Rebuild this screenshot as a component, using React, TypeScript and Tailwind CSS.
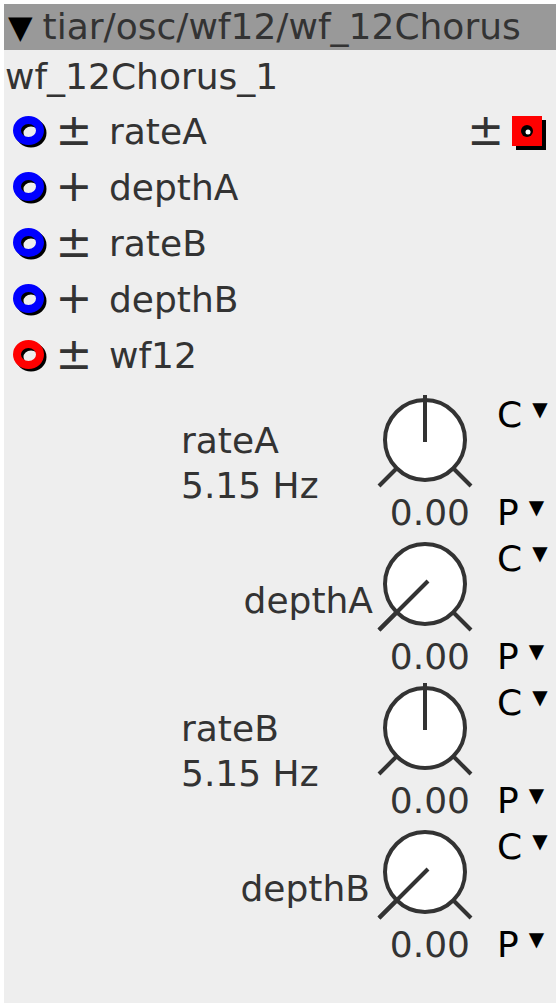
import React from "react";

const FONT = { fontFamily: '"DejaVu Sans", Verdana, sans-serif' };

function Ring({ color }: { color: string }) {
  return (
    <svg width="40" height="40" viewBox="0 0 40 40" className="block">
      <ellipse cx="19" cy="21" rx="11.5" ry="10.5" fill="none" stroke="#000" strokeWidth="8" />
      <ellipse cx="16.5" cy="18.5" rx="11.5" ry="10.5" fill="none" stroke={color} strokeWidth="8" />
    </svg>
  );
}

function Port({ color, sign, label }: { color: string; sign: string; label: string }) {
  return (
    <div className="flex items-center h-[56px]">
      <div className="w-[8px]" />
      <Ring color={color} />
      <div className="w-[40px] ml-[2px] text-[44px] leading-none text-[#333] text-center -translate-y-[2px]">{sign}</div>
      <div className="pl-[15px] text-[36px] leading-none text-[#333]">{label}</div>
    </div>
  );
}

function Knob({ bipolar }: { bipolar: boolean }) {
  const cx = 50;
  const cy = 56;
  const f1 = 28;
  const f2 = 46;
  return (
    <svg width="100" height="106" viewBox="0 0 100 106" className="block">
      <circle cx={cx} cy={cy} r="40" fill="#fff" stroke="#333" strokeWidth="4" />
      <line x1={cx - f1} y1={cy + f1} x2={cx - f2} y2={cy + f2} stroke="#333" strokeWidth="4" />
      <line x1={cx + f1} y1={cy + f1} x2={cx + f2} y2={cy + f2} stroke="#333" strokeWidth="4" />
      {bipolar ? (
        <line x1={cx} y1={cy + 2} x2={cx} y2={cy - 45} stroke="#333" strokeWidth="4" />
      ) : (
        <line x1={cx + 3} y1={cy - 3} x2={cx - f2} y2={cy + f2} stroke="#333" strokeWidth="4" />
      )}
    </svg>
  );
}

function KnobRow({
  label,
  sub,
  bipolar,
  labelClass,
}: {
  label: string;
  sub?: string;
  bipolar: boolean;
  labelClass: string;
}) {
  return (
    <div className="flex h-[144px]">
      <div className={"flex-1 flex items-center " + labelClass}>
        <div className="text-[36px] leading-[45px] text-[#333]">
          <div>{label}</div>
          {sub && <div>{sub}</div>}
        </div>
      </div>
      <div className="w-[100px] flex flex-col">
        <Knob bipolar={bipolar} />
        <div className="mt-[8px] h-[30px] text-[36px] leading-[30px] text-[#333] text-right pr-[5px]">0.00</div>
      </div>
      <div className="w-[52px] ml-[22px] mr-[7px] flex flex-col justify-between pt-[16px] text-[36px] leading-[30px] text-black">
        <div className="flex items-center">
          <span>C</span>
          <span className="ml-[10px] text-[20px] leading-[30px] -translate-y-[6px]">▼</span>
        </div>
        <div className="flex items-center">
          <span>P</span>
          <span className="ml-[10px] text-[20px] leading-[30px] -translate-y-[6px]">▼</span>
        </div>
      </div>
    </div>
  );
}

export default function App() {
  return (
    <div className="w-[560px] h-[1008px] bg-white pt-[4px] pl-[4px]" style={FONT}>
      <div className="w-[552px] h-[999px] bg-[#eeeeee] flex flex-col">
        <div className="h-[46px] bg-[#999999] flex items-center">
          <span className="ml-[4px] text-[32px] leading-none text-black">▼</span>
          <span className="ml-[10px] text-[36px] leading-none text-[#333]">tiar/osc/wf12/wf_12Chorus</span>
        </div>
        <div className="h-[54px] flex items-center pl-[1px] text-[36px] leading-none text-[#333]">wf_12Chorus_1</div>
        <div className="relative">
          <Port color="#0000ff" sign="±" label="rateA" />
          <Port color="#0000ff" sign="+" label="depthA" />
          <Port color="#0000ff" sign="±" label="rateB" />
          <Port color="#0000ff" sign="+" label="depthB" />
          <Port color="#ff0000" sign="±" label="wf12" />
          <div className="absolute top-0 right-[8px] h-[56px] flex items-center">
            <span className="text-[44px] leading-none text-[#333] -translate-y-[2px]">±</span>
            <svg width="40" height="40" viewBox="0 0 40 40" className="ml-[4px] block">
              <rect x="8" y="8" width="30" height="30" fill="#000" />
              <rect x="4" y="4" width="30" height="30" fill="#ff0000" />
              <circle cx="19" cy="19" r="6" fill="#000" />
              <circle cx="20" cy="20" r="2.5" fill="#fff" />
            </svg>
          </div>
        </div>
        <KnobRow label="rateA" sub="5.15 Hz" bipolar labelClass="justify-start pl-[177px] pt-[14px]" />
        <KnobRow label="depthA" bipolar={false} labelClass="justify-end pr-[2px]" />
        <KnobRow label="rateB" sub="5.15 Hz" bipolar labelClass="justify-start pl-[177px] pt-[14px]" />
        <KnobRow label="depthB" bipolar={false} labelClass="justify-end pr-[5px]" />
      </div>
    </div>
  );
}
